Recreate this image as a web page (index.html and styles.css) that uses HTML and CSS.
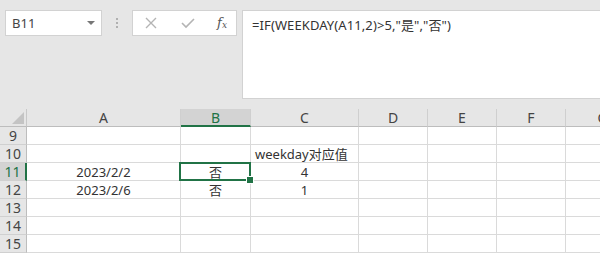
FILE: index.html
```html
<!DOCTYPE html>
<html lang="zh-CN">
<head>
    <meta charset="UTF-8">
    <title>WEEKDAY</title>
    <link rel="stylesheet" href="styles.css">
</head>
<body>
    <div class="toolbar">
        <div class="name-box">
            <span>B11</span>
            <span class="caret"></span>
        </div>
        <div class="grip"><i></i><i></i><i></i></div>
        <div class="fx-box">
            <svg width="14" height="14" viewBox="0 0 14 14"><path d="M2 2 L12 12 M12 2 L2 12" stroke="#b4b4b4" stroke-width="1.4" fill="none"/></svg>
            <svg width="16" height="14" viewBox="0 0 16 14"><path d="M2 7 L6 11 L14 3" stroke="#b4b4b4" stroke-width="1.6" fill="none"/></svg>
            <span class="fx">f<sub>x</sub></span>
        </div>
        <div class="formula">=IF(WEEKDAY(A11,2)&gt;5,"是","否")</div>
    </div>

    <div class="sheet">
        <div class="corner"><span class="tri"></span></div>
        <div class="col-head">A</div>
        <div class="col-head active">B</div>
        <div class="col-head">C</div>
        <div class="col-head">D</div>
        <div class="col-head">E</div>
        <div class="col-head">F</div>
        <div class="col-head">G</div>

        <div class="row-head">9</div>
        <div class="cell"></div><div class="cell"></div><div class="cell"></div><div class="cell"></div><div class="cell"></div><div class="cell"></div><div class="cell"></div>

        <div class="row-head">10</div>
        <div class="cell"></div><div class="cell"></div><div class="cell left">weekday对应值</div><div class="cell"></div><div class="cell"></div><div class="cell"></div><div class="cell"></div>

        <div class="row-head active">11</div>
        <div class="cell center">2023/2/2</div><div class="cell center selected">否</div><div class="cell center">4</div><div class="cell"></div><div class="cell"></div><div class="cell"></div><div class="cell"></div>

        <div class="row-head">12</div>
        <div class="cell center">2023/2/6</div><div class="cell center">否</div><div class="cell center">1</div><div class="cell"></div><div class="cell"></div><div class="cell"></div><div class="cell"></div>

        <div class="row-head">13</div>
        <div class="cell"></div><div class="cell"></div><div class="cell"></div><div class="cell"></div><div class="cell"></div><div class="cell"></div><div class="cell"></div>

        <div class="row-head">14</div>
        <div class="cell"></div><div class="cell"></div><div class="cell"></div><div class="cell"></div><div class="cell"></div><div class="cell"></div><div class="cell"></div>

        <div class="row-head">15</div>
        <div class="cell"></div><div class="cell"></div><div class="cell"></div><div class="cell"></div><div class="cell"></div><div class="cell"></div><div class="cell"></div>
    </div>
</body>
</html>
```

FILE: styles.css
```css
* {
    margin: 0;
    padding: 0;
    box-sizing: border-box;
}

body {
    width: 600px;
    height: 255px;
    overflow: hidden;
    background: #fff;
    font-family: "Noto Sans", "Noto Sans CJK SC", sans-serif;
    color: #333;
}

/* barre de formule */
.toolbar {
    height: 109px;
    background: #e6e6e6;
    display: flex;
    align-items: flex-start;
    padding: 10px 0 0 5px;
}

.name-box {
    flex-shrink: 0;
    width: 97px;
    height: 26px;
    background: #fff;
    border: 1px solid #d2d2d2;
    display: flex;
    align-items: center;
    justify-content: space-between;
    padding: 0 6px 0 6px;
    font-size: 13px;
    color: #444;
}

.caret {
    width: 0;
    height: 0;
    border-left: 4px solid transparent;
    border-right: 4px solid transparent;
    border-top: 4px solid #777;
}

.grip {
    flex-shrink: 0;
    width: 30px;
    height: 26px;
    display: flex;
    flex-direction: column;
    align-items: center;
    justify-content: center;
    gap: 2px;
}

.grip i {
    width: 2px;
    height: 2px;
    background: #b0b0b0;
}

.fx-box {
    flex-shrink: 0;
    width: 105px;
    height: 26px;
    background: #fff;
    border: 1px solid #d2d2d2;
    display: flex;
    align-items: center;
    justify-content: space-between;
    padding: 0 9px 0 11px;
}

.fx {
    font-family: "DejaVu Serif", serif;
    font-style: italic;
    font-size: 13px;
    color: #555;
    line-height: 1;
}

.fx sub {
    font-size: 9px;
    vertical-align: -1px;
}

.formula {
    flex: 1;
    height: 89px;
    margin-left: 5px;
    background: #fff;
    border: 1px solid #d2d2d2;
    border-right: none;
    padding: 4px 0 0 9px;
    font-size: 13px;
    letter-spacing: 0.1px;
    color: #333;
    white-space: nowrap;
}

/* feuille */
.sheet {
    display: grid;
    width: 600px;
    overflow: hidden;
    grid-template-columns: 27px 154px 70px 108px 69px 69px 69px 74px;
    grid-auto-rows: 18px;
    font-size: 13px;
}

.corner {
    background: #e6e6e6;
    border-right: 1px solid #c8c8c8;
    border-bottom: 1px solid #bdbdbd;
    display: flex;
    align-items: flex-end;
    justify-content: flex-end;
    padding: 0 2px 2px 0;
}

.tri {
    width: 0;
    height: 0;
    border-left: 12px solid transparent;
    border-bottom: 12px solid #c4c4c4;
}

.col-head {
    background: #e6e6e6;
    border-right: 1px solid #cfcfcf;
    border-bottom: 1px solid #bdbdbd;
    display: flex;
    align-items: center;
    justify-content: center;
    font-size: 14px;
    color: #444;
}

.col-head.active {
    background: #d3d3d3;
    border-bottom: 2px solid #217346;
    color: #217346;
}

.row-head {
    background: #e6e6e6;
    border-right: 1px solid #bdbdbd;
    border-bottom: 1px solid #d0d0d0;
    display: flex;
    align-items: center;
    justify-content: center;
    font-size: 14px;
    color: #444;
}

.row-head.active {
    background: #d3d3d3;
    border-right: 2px solid #217346;
    color: #217346;
}

.cell {
    border-right: 1px solid #dadada;
    border-bottom: 1px solid #dadada;
    display: flex;
    align-items: center;
    white-space: nowrap;
    color: #333;
}

.cell.center {
    justify-content: center;
}

.cell.left {
    padding-left: 4px;
}

.cell.selected {
    position: relative;
}

.cell.selected::after {
    content: '';
    position: absolute;
    top: -1px;
    left: -2px;
    right: -1px;
    bottom: -1px;
    border: 2px solid #217346;
}

.cell.selected::before {
    content: '';
    position: absolute;
    right: -4px;
    bottom: -4px;
    width: 6px;
    height: 6px;
    background: #217346;
    border: 1px solid #fff;
    z-index: 1;
}
```
